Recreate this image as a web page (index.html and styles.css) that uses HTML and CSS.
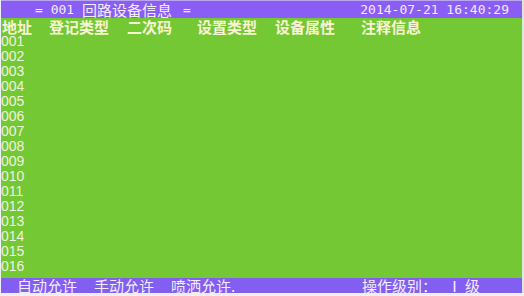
FILE: index.html
```html
<!DOCTYPE html>
<html lang="zh-CN">
<head>
    <meta charset="UTF-8">
    <meta name="viewport" content="width=device-width, initial-scale=1.0">
    <title>回路设备信息</title>
    <link rel="stylesheet" href="styles.css">
</head>
<body>
    <div class="screen">
        <!-- Title bar -->
        <div class="title-bar">
            <div class="title">
                <span class="ascii">= 001 </span><span class="cjk">回路设备信息</span><span class="ascii eq-end">=</span>
            </div>
            <div class="clock">2014-07-21 16:40:29</div>
        </div>

        <!-- Device table -->
        <div class="panel">
            <div class="head-row">
                <span>地址</span>
                <span>登记类型</span>
                <span>二次码</span>
                <span>设置类型</span>
                <span>设备属性</span>
                <span>注释信息</span>
            </div>
            <div class="rows">
                <div class="row">001</div>
                <div class="row">002</div>
                <div class="row">003</div>
                <div class="row">004</div>
                <div class="row">005</div>
                <div class="row">006</div>
                <div class="row">007</div>
                <div class="row">008</div>
                <div class="row">009</div>
                <div class="row">010</div>
                <div class="row">011</div>
                <div class="row">012</div>
                <div class="row">013</div>
                <div class="row">014</div>
                <div class="row">015</div>
                <div class="row">016</div>
            </div>
        </div>

        <!-- Status bar -->
        <div class="status-bar">
            <div class="modes">
                <span>自动允许</span>
                <span>手动允许</span>
                <span>喷洒允许.</span>
            </div>
            <div class="level">操作级别：<span class="level-num">Ⅰ</span>级</div>
        </div>
    </div>
</body>
</html>
```

FILE: styles.css
```css
body, html {
    margin: 0;
    padding: 0;
    width: 524px;
    height: 296px;
    overflow: hidden;
    background-color: #eef0f4;
    font-family: "Noto Sans CJK SC", sans-serif;
}
.screen {
    width: 521px;
    height: 293px;
    margin-left: 1px;
    border-right: 2px solid #dfe6dc;
    display: flex;
    flex-direction: column;
    background-color: #74c834;
}
.title-bar {
    height: 17px;
    border-top: 1px solid #b8a6f2;
    background-color: #8a5ef4;
    color: #f2ecff;
    display: flex;
    justify-content: space-between;
    align-items: center;
    padding: 0 13px 0 34px;
}
.title {
    white-space: pre;
    display: flex;
    align-items: center;
}
.ascii {
    font-family: "DejaVu Sans Mono", monospace;
    font-size: 13px;
    line-height: 15px;
}
.cjk {
    font-size: 15px;
    line-height: 15px;
}
.eq-end {
    margin-left: 11px;
}
.clock {
    font-family: "DejaVu Sans Mono", monospace;
    font-size: 13px;
    line-height: 15px;
}
.panel {
    flex: 1;
    display: flex;
    flex-direction: column;
}
.head-row {
    height: 16px;
    display: grid;
    grid-template-columns: 47px 78px 70px 78px 86px auto;
    align-items: center;
    padding-left: 1px;
    font-size: 15px;
    line-height: 15px;
    font-weight: bold;
    color: #f8f4d4;
}
.rows {
    display: flex;
    flex-direction: column;
}
.row {
    height: 15px;
    line-height: 15px;
    font-family: "Liberation Sans", Arial, sans-serif;
    font-size: 14px;
    color: #eef2e2;
}
.status-bar {
    height: 15px;
    margin-top: 4px;
    background-color: #825ff0;
    color: #f2eeff;
    font-size: 15px;
    line-height: 15px;
    display: flex;
    justify-content: space-between;
    padding: 0 42px 0 16px;
}
.modes {
    display: flex;
    gap: 17px;
}
.level-num {
    margin-left: 10px;
    margin-right: 3px;
}
```
